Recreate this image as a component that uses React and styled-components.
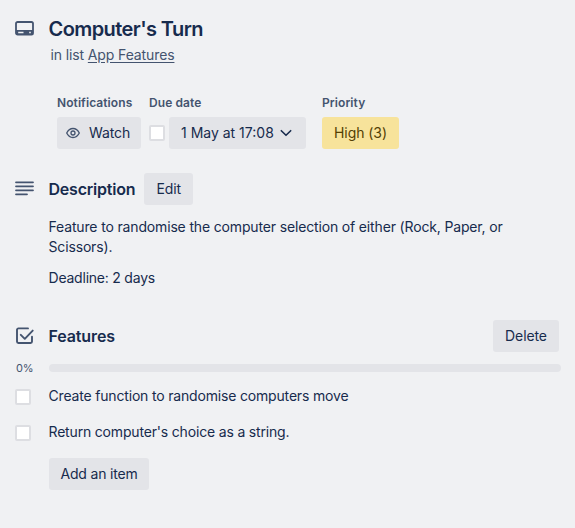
import React from "react";
import styled, { createGlobalStyle } from "styled-components";

const GlobalStyle = createGlobalStyle`
  * { box-sizing: border-box; }
  body {
    margin: 0;
    background: #f0f1f3;
    color: #172b4d;
    font-family: Inter, "Liberation Sans", sans-serif;
    font-size: 14px;
    line-height: 20px;
  }
  h2, h3, h4, p, ul { margin: 0; padding: 0; }
`;

const Card = styled.main`
  height: 528px;
  padding: 16px 14px 0 15px;
  background: #f0f1f3;
  overflow: hidden;
`;

const Row = styled.header`
  display: grid;
  grid-template-columns: 34px 1fr;
  align-items: ${(p) => p.$align || "center"};
`;

const Icon = styled.svg`
  display: block;
  color: #44546f;
`;

const HeaderIcon = styled(Icon)`
  margin-top: 5px;
`;

const LinesIcon = styled(Icon)`
  margin-top: -2px;
`;

const Title = styled.h2`
  font-size: 20px;
  line-height: 26px;
  font-weight: 600;
  letter-spacing: -0.58px;
  margin-left: -0.5px;
`;

const Location = styled.p`
  margin: 3px 0 0 1.5px;
  color: #44546f;
  letter-spacing: -0.12px;
  a { color: inherit; text-decoration: underline; text-underline-offset: 2px; }
`;

const Details = styled.section`
  display: flex;
  margin: 28px 0 0 42px;
`;

const Detail = styled.div`
  margin-right: ${(p) => p.$gap || 0}px;
`;

const DetailLabel = styled.h4`
  height: 20px;
  margin-bottom: 4px;
  color: #44546f;
  font-size: 12px;
  line-height: 20px;
  font-weight: 600;
  white-space: nowrap;
  letter-spacing: 0.08px;
`;

const Controls = styled.div`
  display: flex;
  align-items: center;
  gap: 4px;
`;

const Button = styled.button`
  display: inline-flex;
  align-items: center;
  justify-content: ${(p) => (p.$start ? "flex-start" : "center")};
  width: ${(p) => p.$width}px;
  height: 32px;
  padding: ${(p) => (p.$start ? `0 0 0 ${p.$start}px` : "0")};
  border: 0;
  border-radius: 3px;
  background: ${(p) => (p.$high ? "#f7e39b" : "#e3e4e8")};
  color: ${(p) => (p.$high ? "#533f04" : "#172b4d")};
  font: inherit;
  letter-spacing: ${(p) => p.$tracking || 0}px;
  white-space: nowrap;
`;

const Checkbox = styled.input.attrs({ type: "checkbox" })`
  appearance: none;
  display: block;
  flex: none;
  width: 16px;
  height: 16px;
  margin: 0;
  border: 2px solid #dddee2;
  border-radius: 2px;
  background: #fff;
`;

const SectionTitle = styled.h3`
  font-size: 16px;
  line-height: 20px;
  font-weight: 600;
  letter-spacing: ${(p) => p.$tracking || 0}px;
  margin-left: -0.5px;
`;

const Heading = styled.div`
  display: flex;
  align-items: center;
  gap: 9px;
  justify-content: ${(p) => (p.$spread ? "space-between" : "flex-start")};
  padding-right: ${(p) => (p.$spread ? 2 : 0)}px;
`;

const Description = styled.section`
  margin-top: 24px;
`;

const Copy = styled.div`
  margin: 12px 30px 0 33.5px;
  p + p { margin-top: 11px; }
`;

const Paragraph = styled.p`
  letter-spacing: ${(p) => p.$tracking || 0}px;
`;

const Checklist = styled.section`
  margin-top: 32px;
`;

const Progress = styled.div`
  display: grid;
  grid-template-columns: 34px 1fr;
  align-items: center;
  height: 20px;
  margin-top: 6px;
`;

const Percent = styled.span`
  padding-left: 1px;
  color: #44546f;
  font-size: 11px;
  letter-spacing: -0.25px;
`;

const Track = styled.div`
  height: 8px;
  border-radius: 4px;
  background: #e3e4e8;
`;

const Items = styled.ul`
  list-style: none;
`;

const Item = styled.li`
  display: grid;
  grid-template-columns: 33.5px 1fr;
  align-items: center;
  height: 36px;
  letter-spacing: -0.175px;
  ${Checkbox} { margin-top: 1px; }
`;

const Footer = styled.div`
  margin: 8px 0 0 34px;
`;

const WatchText = styled.span`
  margin-left: 9px;
`;

const Chevron = styled(Icon)`
  margin-left: 6px;
`;

export default function App() {
  return (
    <Card>
      <GlobalStyle />
      <Row $align="start">
        <HeaderIcon width="19" height="16" viewBox="0 0 19 16" fill="none">
          <rect x="1" y="1" width="17" height="12.600" rx="1.6" stroke="currentColor" strokeWidth="1.8" />
          <path d="M1 8.900h17v3.500a1.500 1.500 0 0 1-1.500 1.500h-14A1.500 1.500 0 0 1 1 12.400z" fill="currentColor" />
          <path d="M3.200 11.400h5.300M14.200 11.400h1.600" stroke="#f0f1f3" strokeWidth="1.5" />
        </HeaderIcon>
        <div>
          <Title>Computer's Turn</Title>
          <Location>in list <a>App Features</a></Location>
        </div>
      </Row>

      <Details>
        <Detail $gap={8}>
          <DetailLabel>Notifications</DetailLabel>
          <Button $width={84} $start={9} $tracking={-0.1}>
            <Icon width="14" height="14" viewBox="0 0 14 14" fill="none" stroke="currentColor" strokeWidth="1.3">
              <path d="M.7 7C2 4.400 4.200 2.500 7 2.500S12 4.400 13.300 7C12 9.600 9.800 11.500 7 11.500S2 9.600.7 7z" />
              <circle cx="7" cy="7" r="2" />
            </Icon>
            <WatchText>Watch</WatchText>
          </Button>
        </Detail>
        <Detail $gap={16}>
          <DetailLabel>Due date</DetailLabel>
          <Controls>
            <Checkbox aria-label="Due date complete" />
            <Button $width={137} $start={12}>
              1 May at 17:08
              <Chevron width="12" height="8" viewBox="0 0 12 8" fill="none">
                <path d="m1.300 1.700 4.700 4.600 4.700-4.600" stroke="#172b4d" strokeWidth="1.6" strokeLinecap="round" strokeLinejoin="round" />
              </Chevron>
            </Button>
          </Controls>
        </Detail>
        <Detail>
          <DetailLabel>Priority</DetailLabel>
          <Button $high $width={77} $tracking={-0.05}>High (3)</Button>
        </Detail>
      </Details>

      <Description>
        <Row>
          <LinesIcon width="19" height="16" viewBox="0 0 19 16" fill="none">
            <path d="M1 2.300h17M1 6.300h17M1 10.300h17M1 14.300h11" stroke="currentColor" strokeWidth="1.8" strokeLinecap="round" />
          </LinesIcon>
          <Heading>
            <SectionTitle $tracking={-0.22}>Description</SectionTitle>
            <Button $width={49} $tracking={-0.1}>Edit</Button>
          </Heading>
        </Row>
        <Copy>
          <Paragraph $tracking={-0.155}>Feature to randomise the computer selection of either (Rock, Paper, or Scissors).</Paragraph>
          <Paragraph $tracking={-0.22}>Deadline: 2 days</Paragraph>
        </Copy>
      </Description>

      <Checklist>
        <Row>
          <Icon width="19" height="18" viewBox="0 0 19 18" fill="none" stroke="currentColor" strokeWidth="1.9" strokeLinecap="round" strokeLinejoin="round">
            <path d="M13 1.400H3.400a1.400 1.400 0 0 0-1.400 1.400v11.800A1.400 1.400 0 0 0 3.400 16h12.200a1.400 1.400 0 0 0 1.400-1.400V9.800" />
            <path d="m5.800 7.800 4 4 7.900-8.200" />
          </Icon>
          <Heading $spread>
            <SectionTitle $tracking={-0.12}>Features</SectionTitle>
            <Button $width={66} $tracking={-0.1}>Delete</Button>
          </Heading>
        </Row>
        <Progress>
          <Percent>0%</Percent>
          <Track />
        </Progress>
        <Items>
          <Item><Checkbox aria-label="Create function" /><span>Create function to randomise computers move</span></Item>
          <Item><Checkbox aria-label="Return choice" /><span>Return computer's choice as a string.</span></Item>
        </Items>
        <Footer>
          <Button $width={100} $tracking={-0.18}>Add an item</Button>
        </Footer>
      </Checklist>
    </Card>
  );
}
